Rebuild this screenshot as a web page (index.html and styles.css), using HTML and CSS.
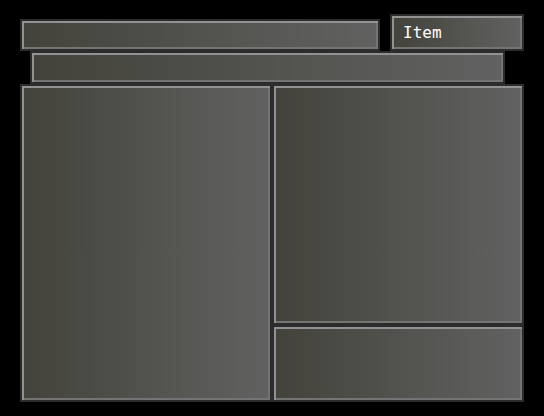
FILE: index.html
```html
<!DOCTYPE html>
<html lang="en">
<head>
    <meta charset="UTF-8">
    <title>Item</title>
    <link rel="stylesheet" href="styles.css">
</head>
<body>
    <div class="tela">
        <div class="linha-topo">
            <div class="janela barra-titulo"></div>
            <div class="janela janela-item">Item</div>
        </div>
        <div class="janela barra-ajuda"></div>
        <div class="area">
            <div class="janela lista"></div>
            <div class="coluna">
                <div class="janela detalhe"></div>
                <div class="janela rodape"></div>
            </div>
        </div>
    </div>
</body>
</html>
```

FILE: styles.css
```css
body {
    margin: 0;
    padding: 0;
    background-color: #000;
    font-family: "DejaVu Sans Mono", monospace;
}
.tela {
    width: 544px;
    height: 416px;
    padding: 14px 0 0 20px;
    box-sizing: border-box;
}
.janela {
    box-sizing: border-box;
    border: 2px solid #2c2c2c;
    box-shadow: inset 2px 2px 0 #929292, inset -2px -2px 0 #747474;
    background: linear-gradient(to right, #43433b, #616161);
}
.linha-topo {
    display: flex;
    align-items: flex-end;
    gap: 10px;
}
.barra-titulo {
    width: 360px;
    height: 32px;
}
.janela-item {
    width: 134px;
    height: 37px;
    padding: 7px 0 0 11px;
    color: #fff;
    font-size: 16px;
}
.barra-ajuda {
    width: 475px;
    height: 33px;
    margin: 0 0 0 10px;
}
.area {
    display: flex;
    margin-top: 0;
}
.lista {
    width: 252px;
    height: 318px;
}
.coluna {
    display: flex;
    flex-direction: column;
}
.detalhe {
    width: 252px;
    height: 241px;
}
.rodape {
    width: 252px;
    height: 77px;
}
```
